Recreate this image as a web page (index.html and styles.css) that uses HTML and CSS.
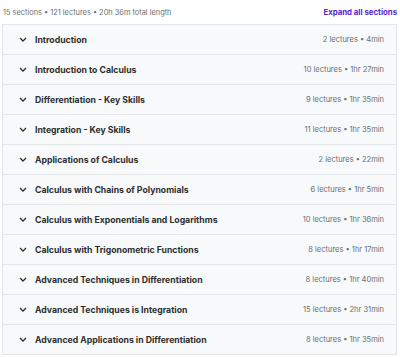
FILE: index.html
```html
<!DOCTYPE html>
<html lang="en">
<head>
    <meta charset="UTF-8">
    <title>Course content</title>
    <link rel="stylesheet" href="styles.css">
</head>
<body>
    <div class="content-header">
        <span class="summary">15 sections • 121 lectures • 20h 36m total length</span>
        <button class="expand-all">Expand all sections</button>
    </div>

    <div class="sections">
        <div class="section"><span class="chevron"><svg width="8" height="5" viewBox="0 0 8 5"><path d="M1 1l3 3 3-3" fill="none" stroke="#2d2f31" stroke-width="1.3"/></svg></span><span class="title">Introduction</span><span class="meta">2 lectures • 4min</span></div>
        <div class="section"><span class="chevron"><svg width="8" height="5" viewBox="0 0 8 5"><path d="M1 1l3 3 3-3" fill="none" stroke="#2d2f31" stroke-width="1.3"/></svg></span><span class="title">Introduction to Calculus</span><span class="meta">10 lectures • 1hr 27min</span></div>
        <div class="section"><span class="chevron"><svg width="8" height="5" viewBox="0 0 8 5"><path d="M1 1l3 3 3-3" fill="none" stroke="#2d2f31" stroke-width="1.3"/></svg></span><span class="title">Differentiation - Key Skills</span><span class="meta">9 lectures • 1hr 35min</span></div>
        <div class="section"><span class="chevron"><svg width="8" height="5" viewBox="0 0 8 5"><path d="M1 1l3 3 3-3" fill="none" stroke="#2d2f31" stroke-width="1.3"/></svg></span><span class="title">Integration - Key Skills</span><span class="meta">11 lectures • 1hr 35min</span></div>
        <div class="section"><span class="chevron"><svg width="8" height="5" viewBox="0 0 8 5"><path d="M1 1l3 3 3-3" fill="none" stroke="#2d2f31" stroke-width="1.3"/></svg></span><span class="title">Applications of Calculus</span><span class="meta">2 lectures • 22min</span></div>
        <div class="section"><span class="chevron"><svg width="8" height="5" viewBox="0 0 8 5"><path d="M1 1l3 3 3-3" fill="none" stroke="#2d2f31" stroke-width="1.3"/></svg></span><span class="title">Calculus with Chains of Polynomials</span><span class="meta">6 lectures • 1hr 5min</span></div>
        <div class="section"><span class="chevron"><svg width="8" height="5" viewBox="0 0 8 5"><path d="M1 1l3 3 3-3" fill="none" stroke="#2d2f31" stroke-width="1.3"/></svg></span><span class="title">Calculus with Exponentials and Logarithms</span><span class="meta">10 lectures • 1hr 36min</span></div>
        <div class="section"><span class="chevron"><svg width="8" height="5" viewBox="0 0 8 5"><path d="M1 1l3 3 3-3" fill="none" stroke="#2d2f31" stroke-width="1.3"/></svg></span><span class="title">Calculus with Trigonometric Functions</span><span class="meta">8 lectures • 1hr 17min</span></div>
        <div class="section"><span class="chevron"><svg width="8" height="5" viewBox="0 0 8 5"><path d="M1 1l3 3 3-3" fill="none" stroke="#2d2f31" stroke-width="1.3"/></svg></span><span class="title">Advanced Techniques in Differentiation</span><span class="meta">8 lectures • 1hr 40min</span></div>
        <div class="section"><span class="chevron"><svg width="8" height="5" viewBox="0 0 8 5"><path d="M1 1l3 3 3-3" fill="none" stroke="#2d2f31" stroke-width="1.3"/></svg></span><span class="title">Advanced Techniques is Integration</span><span class="meta">15 lectures • 2hr 31min</span></div>
        <div class="section"><span class="chevron"><svg width="8" height="5" viewBox="0 0 8 5"><path d="M1 1l3 3 3-3" fill="none" stroke="#2d2f31" stroke-width="1.3"/></svg></span><span class="title">Advanced Applications in Differentiation</span><span class="meta">8 lectures • 1hr 35min</span></div>
    </div>
</body>
</html>
```

FILE: styles.css
```css
body {
    font-family: Inter, "Liberation Sans", sans-serif;
    background-color: #fff;
    color: #2d2f31;
    margin: 0;
    padding: 0 3px 0 2px;
}

.content-header {
    display: flex;
    justify-content: space-between;
    align-items: center;
    height: 24px;
    padding: 0 0 0 1px;
}

.summary {
    font-size: 7.4px;
    color: #6a6f73;
}

.expand-all {
    background: none;
    border: none;
    padding: 0;
    font-family: inherit;
    font-size: 7.8px;
    font-weight: 700;
    color: #5624d0;
    cursor: pointer;
}

.sections {
    border: 1px solid #e3e6e9;
    border-bottom: none;
}

.section {
    display: flex;
    align-items: center;
    height: 29px;
    border-bottom: 1px solid #e3e6e9;
    background-color: #f7f9fa;
    padding: 0 12px 0 16px;
}

.chevron {
    display: flex;
    width: 16px;
}

.title {
    flex: 1;
    font-size: 8.7px;
    font-weight: 700;
    color: #2d2f31;
}

.meta {
    font-size: 7.5px;
    color: #6a6f73;
}
```
